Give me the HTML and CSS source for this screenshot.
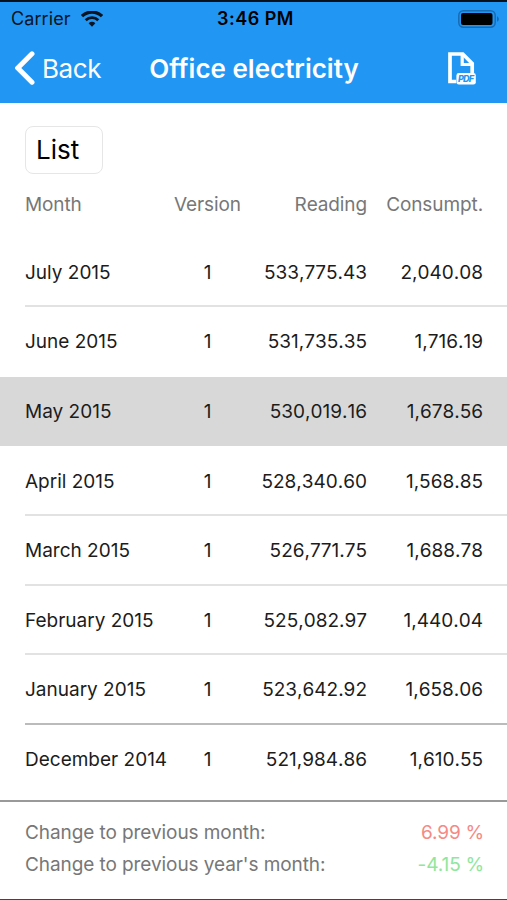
FILE: index.html
```
<!DOCTYPE html>
<html lang="en">
<head>
    <meta charset="UTF-8">
    <meta name="viewport" content="width=device-width, initial-scale=1.0">
    <title>Office electricity</title>
    <link rel="stylesheet" href="styles.css">
</head>
<body>

    <div class="screen">
        <header class="header">
            <!-- Status bar -->
            <div class="status-bar">
                <div class="carrier">
                    <span>Carrier</span>
                    <svg class="wifi" viewBox="0 0 22 16" width="22" height="16">
                        <path d="M1 5.200a14.200 14.200 0 0 1 20 0" fill="none" stroke="#0a1420" stroke-width="3.300"/>
                        <path d="M4.700 9.200a9 9 0 0 1 12.600 0" fill="none" stroke="#0a1420" stroke-width="2.900"/>
                        <path d="M11 15.800l-3.400-3.600a4.900 4.900 0 0 1 6.800 0z" fill="#0a1420"/>
                    </svg>
                </div>
                <span class="time">3:46 PM</span>
                <svg class="battery" viewBox="0 0 42 18" width="42" height="18">
                    <rect x="0.8" y="0.8" width="36.4" height="16.4" rx="4.6" fill="none" stroke="#176bb2" stroke-width="1.5"/>
                    <rect x="3" y="3" width="31.5" height="12" rx="2" fill="#000"/>
                    <path d="M39 6.2c2.4 1 2.4 4.6 0 5.6z" fill="#176bb2"/>
                </svg>
            </div>

            <!-- Navigation bar -->
            <nav class="nav-bar">
                <a class="back">
                    <svg viewBox="0 0 20 34" width="20" height="34">
                        <path d="M17 2.800L2.800 17L17 31.200" fill="none" stroke="#fff" stroke-width="5" stroke-linecap="round"/>
                    </svg>
                    <span>Back</span>
                </a>
                <h1>Office electricity</h1>
                <svg class="pdf" viewBox="0 0 28 33" width="28" height="33">
                    <path d="M8 29.500H2V2h12.800l9.400 9.400V21" fill="none" stroke="#fff" stroke-width="3.700"/>
                    <path d="M14.200 2.500v10H24" fill="none" stroke="#fff" stroke-width="3.200"/>
                    <rect x="8.400" y="21" width="19.400" height="11.600" rx="2.400" fill="#fff"/>
                    <text class="pdf-text" x="9.900" y="30" textLength="16.200">PDF</text>
                </svg>
            </nav>
        </header>

        <main class="content">
            <button class="list-button">List</button>

            <div class="row table-head">
                <span>Month</span>
                <span class="version">Version</span>
                <span class="number">Reading</span>
                <span class="number">Consumpt.</span>
            </div>

            <div class="readings">
                <div class="row"><span>July 2015</span><span class="version">1</span><span class="number">533,775.43</span><span class="number">2,040.08</span></div>
                <div class="row no-line"><span>June 2015</span><span class="version">1</span><span class="number">531,735.35</span><span class="number">1,716.19</span></div>
                <div class="row selected"><span>May 2015</span><span class="version">1</span><span class="number">530,019.16</span><span class="number">1,678.56</span></div>
                <div class="row"><span>April 2015</span><span class="version">1</span><span class="number">528,340.60</span><span class="number">1,568.85</span></div>
                <div class="row"><span>March 2015</span><span class="version">1</span><span class="number">526,771.75</span><span class="number">1,688.78</span></div>
                <div class="row"><span>February 2015</span><span class="version">1</span><span class="number">525,082.97</span><span class="number">1,440.04</span></div>
                <div class="row year-end"><span>January 2015</span><span class="version">1</span><span class="number">523,642.92</span><span class="number">1,658.06</span></div>
                <div class="row no-line"><span>December 2014</span><span class="version">1</span><span class="number">521,984.86</span><span class="number">1,610.55</span></div>
            </div>
        </main>

        <!-- Comparison with earlier readings -->
        <footer class="summary">
            <div class="summary-row"><span>Change to previous month:</span><span class="percent up">6.99 %</span></div>
            <div class="summary-row"><span>Change to previous year's month:</span><span class="percent down">-4.15 %</span></div>
        </footer>
    </div>

</body>
</html>
```
FILE: styles.css
```
* {
    box-sizing: border-box;
}

body {
    font-family: Inter, 'Liberation Sans', sans-serif;
    font-size: 19px;
    color: #1c1c1c;
    background-color: #fff;
    margin: 0;
}

.screen {
    display: flex;
    flex-direction: column;
    height: 900px;
    border-top: 2px solid #06111c;
    border-bottom: 1px solid #444;
    overflow: hidden;
}

.header {
    height: 101px;
    background-color: #2296f3;
}

.status-bar {
    display: grid;
    grid-template-columns: 1fr auto 1fr;
    align-items: center;
    height: 33px;
    padding: 0 7px 0 11px;
    color: #0a1420;
    font-size: 18px;
}

.carrier {
    display: flex;
    align-items: center;
    gap: 10px;
    letter-spacing: 0.1px;
}

.time {
    color: #000;
    font-weight: 600;
    letter-spacing: 0.5px;
}

.battery {
    justify-self: end;
}

.nav-bar {
    display: grid;
    grid-template-columns: 1fr auto 1fr;
    align-items: center;
    height: 66px;
    padding: 0 31px 0 15px;
    color: #fff;
}

.back {
    display: flex;
    align-items: center;
    gap: 7px;
    font-size: 26px;
    letter-spacing: -0.4px;
}

h1 {
    margin: 0 0 0 17px;
    font-size: 26px;
    font-weight: 600;
}

.pdf {
    justify-self: end;
}

.pdf-text {
    font-size: 9px;
    font-weight: 800;
    font-style: italic;
    fill: #2296f3;
}

.content {
    height: 697px;
    padding-top: 23px;
}

.list-button {
    display: block;
    width: 78px;
    height: 48px;
    margin-left: 25px;
    padding: 0 0 1px 10px;
    background-color: #fff;
    border: 1px solid #e6e6e6;
    border-radius: 8px;
    color: #000;
    font-family: inherit;
    font-size: 26px;
    text-align: left;
}

.row {
    display: grid;
    grid-template-columns: 149px 67px 126px 116px;
    align-items: center;
    height: 69.6px;
    margin-left: 25px;
    padding-top: 2px;
    border-bottom: 2px solid #e2e2e2;
    white-space: nowrap;
}

.version {
    text-align: center;
}

.number {
    text-align: right;
    font-kerning: none;
}

.table-head {
    height: 61px;
    margin-bottom: 2.6px;
    padding-top: 0;
    border-bottom: none;
    color: #777;
    letter-spacing: -0.1px;
}

.no-line {
    border-bottom-color: transparent;
}

.selected {
    margin-left: 0;
    padding-left: 25px;
    background-color: #d8d8d8;
    border-bottom-color: #d8d8d8;
}

.year-end {
    border-bottom-color: #bbb;
}

.summary {
    flex: 1;
    padding: 14px 23px 0 25px;
    border-top: 2px solid #999;
    color: #777;
    letter-spacing: -0.08px;
}

.summary-row {
    display: flex;
    justify-content: space-between;
    align-items: center;
    height: 32px;
}

.percent {
    word-spacing: -0.5px;
}

.up {
    color: #f58a84;
}

.down {
    color: #90e69d;
}
```
